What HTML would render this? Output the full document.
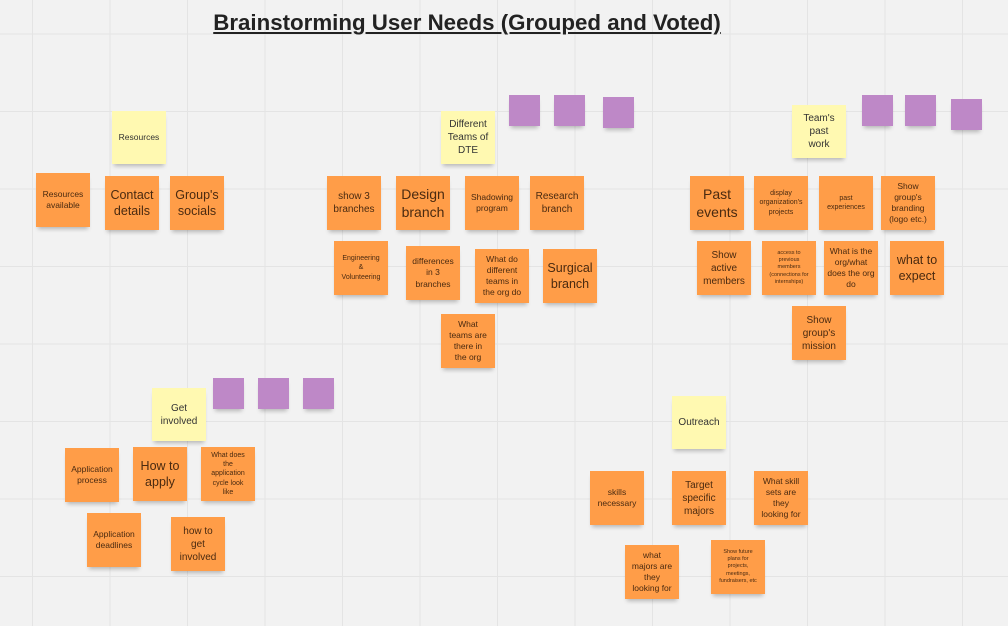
<!DOCTYPE html>
<html><head><meta charset="utf-8"><style>
html,body{margin:0;padding:0}
body{width:1008px;height:626px;overflow:hidden;position:relative;background-color:#f2f2f2;
background-image:linear-gradient(#e4e4e4 1px,transparent 1px),linear-gradient(90deg,#e4e4e4 1px,transparent 1px);
background-size:77.5px 77.5px;background-position:32px 33.5px;font-family:"Liberation Sans","DejaVu Sans",sans-serif}
.t{position:absolute;left:0;width:934px;top:10px;text-align:center;font-weight:bold;font-size:22.3px;color:#222;text-decoration:underline;text-underline-offset:2px}
.n{position:absolute;width:54px;height:54px;display:flex;align-items:center;justify-content:center;text-align:center;color:#4a2a10;box-shadow:0 4px 4px -2px rgba(0,0,0,.25);line-height:1.3;padding:2px 6px;box-sizing:border-box}
.o{background:#ff9d48}
.y{background:#fff9b1;color:#333}
.p{background:#be88c7;width:31px;height:31px}
.s5{font-size:5.5px;padding:2px 7px}.s6{font-size:7px}.s8{font-size:8.5px}.s9{font-size:10px}.s12{font-size:12.5px;padding:2px 3px}.s14{font-size:14px;padding:2px 2px}
</style></head><body>
<div class="t">Brainstorming User Needs (Grouped and Voted)</div>

<div class="n y s8" style="left:112px;top:111px;height:53px">Resources</div>
<div class="n o s8" style="left:36px;top:173px">Resources available</div>
<div class="n o s12" style="left:105px;top:176px">Contact details</div>
<div class="n o s12" style="left:170px;top:176px">Group's socials</div>

<div class="n y s9" style="left:441px;top:111px;height:53px">Different Teams of DTE</div>
<div class="n p" style="left:509px;top:95px"></div>
<div class="n p" style="left:554px;top:95px"></div>
<div class="n p" style="left:603px;top:97px"></div>
<div class="n o s9" style="left:327px;top:176px">show 3 branches</div>
<div class="n o s14" style="left:396px;top:176px">Design branch</div>
<div class="n o s8" style="left:465px;top:176px">Shadowing program</div>
<div class="n o s9" style="left:530px;top:176px">Research branch</div>
<div class="n o s6" style="left:334px;top:241px">Engineering &amp; Volunteering</div>
<div class="n o s8" style="left:406px;top:246px">differences in 3 branches</div>
<div class="n o s8" style="left:475px;top:249px">What do different teams in the org do</div>
<div class="n o s12" style="left:543px;top:249px">Surgical branch</div>
<div class="n o s8" style="left:441px;top:314px">What teams are there in the org</div>

<div class="n y s9" style="left:792px;top:105px;height:53px">Team's past work</div>
<div class="n p" style="left:862px;top:95px"></div>
<div class="n p" style="left:905px;top:95px"></div>
<div class="n p" style="left:951px;top:99px"></div>
<div class="n o s14" style="left:690px;top:176px">Past events</div>
<div class="n o s6" style="left:754px;top:176px">display organization's projects</div>
<div class="n o s6" style="left:819px;top:176px">past experiences</div>
<div class="n o s8" style="left:881px;top:176px">Show group's branding (logo etc.)</div>
<div class="n o s9" style="left:697px;top:241px">Show active members</div>
<div class="n o s5" style="left:762px;top:241px">access to previous members (connections for internships)</div>
<div class="n o s8" style="left:824px;top:241px;padding:2px 1px">What is the org/what does the org do</div>
<div class="n o s12" style="left:890px;top:241px">what to expect</div>
<div class="n o s9" style="left:792px;top:306px">Show group's mission</div>

<div class="n y s9" style="left:152px;top:388px;height:53px">Get involved</div>
<div class="n p" style="left:213px;top:378px"></div>
<div class="n p" style="left:258px;top:378px"></div>
<div class="n p" style="left:303px;top:378px"></div>
<div class="n o s8" style="left:65px;top:448px">Application process</div>
<div class="n o s12" style="left:133px;top:447px">How to apply</div>
<div class="n o s6" style="left:201px;top:447px">What does the application cycle look like</div>
<div class="n o s8" style="left:87px;top:513px">Application deadlines</div>
<div class="n o s9" style="left:171px;top:517px">how to get involved</div>

<div class="n y s9" style="left:672px;top:396px;height:53px">Outreach</div>
<div class="n o s8" style="left:590px;top:471px">skills necessary</div>
<div class="n o s9" style="left:672px;top:471px">Target specific majors</div>
<div class="n o s8" style="left:754px;top:471px">What skill sets are they looking for</div>
<div class="n o s8" style="left:625px;top:545px">what majors are they looking for</div>
<div class="n o s5" style="left:711px;top:540px">Show future plans for projects, meetings, fundraisers, etc</div>
</body></html>
